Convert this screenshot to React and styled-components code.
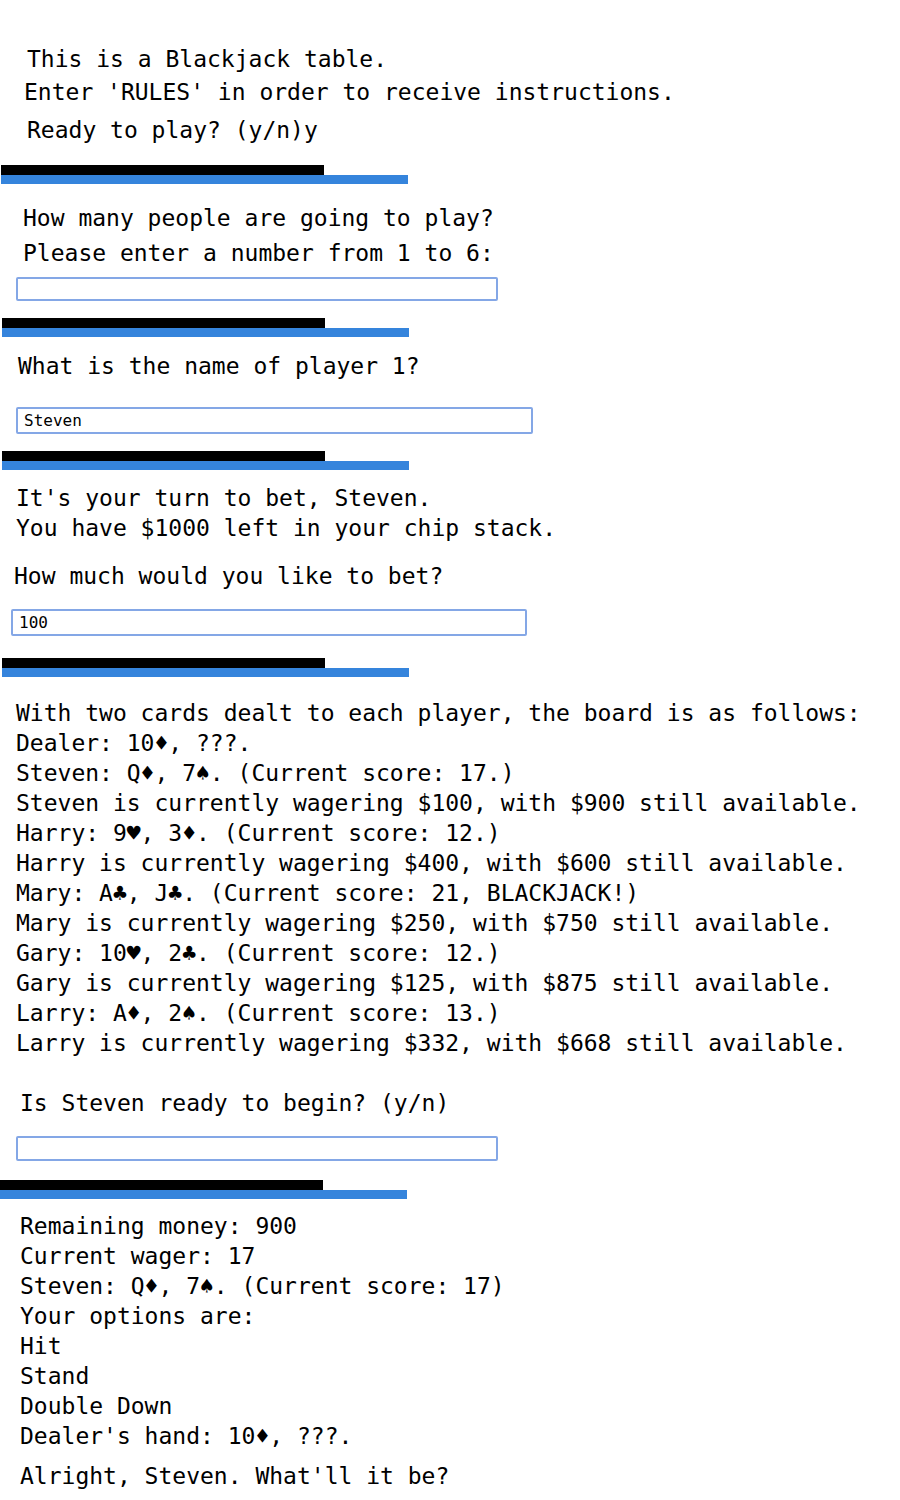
import React from "react";
import styled, { createGlobalStyle } from "styled-components";

const GlobalStyle = createGlobalStyle`
  html, body {
    margin: 0;
    padding: 0;
    background: #ffffff;
  }
  body {
    font-family: "DejaVu Sans Mono", "Liberation Mono", monospace;
    color: #000000;
  }
`;

const Page = styled.div`
  width: 900px;
  display: flex;
  flex-direction: column;
`;

const Line = styled.div`
  font-size: 23px;
  line-height: 30px;
  height: 30px;
  white-space: pre;
  margin-top: ${({ $mt }) => $mt || 0}px;
  padding-left: ${({ $x }) => $x || 16}px;
`;

const Divider = styled.div`
  display: flex;
  flex-direction: column;
  margin-top: ${({ $mt }) => $mt || 0}px;
  padding-left: ${({ $x }) => ($x === undefined ? 2 : $x)}px;
`;

const BlackBar = styled.div`
  width: 323px;
  height: 10px;
  background: #000000;
`;

const BlueBar = styled.div`
  width: 407px;
  height: 9px;
  background: #3584dc;
`;

const Field = styled.input`
  display: block;
  box-sizing: border-box;
  margin: ${({ $mt }) => $mt || 0}px 0 0 ${({ $x }) => $x || 16}px;
  width: ${({ $w }) => $w}px;
  height: ${({ $h }) => $h}px;
  padding: 0 6px;
  border: 2px solid #84a7e6;
  border-radius: 2px;
  background: #ffffff;
  font-family: "DejaVu Sans Mono", "Liberation Mono", monospace;
  font-size: 16px;
  color: #000000;
  outline: none;
`;

const Bar = ({ mt, x }) => (
  <Divider $mt={mt} $x={x}>
    <BlackBar />
    <BlueBar />
  </Divider>
);

const board = [
  "With two cards dealt to each player, the board is as follows:",
  "Dealer: 10♦, ???.",
  "Steven: Q♦, 7♠. (Current score: 17.)",
  "Steven is currently wagering $100, with $900 still available.",
  "Harry: 9♥, 3♦. (Current score: 12.)",
  "Harry is currently wagering $400, with $600 still available.",
  "Mary: A♣, J♣. (Current score: 21, BLACKJACK!)",
  "Mary is currently wagering $250, with $750 still available.",
  "Gary: 10♥, 2♣. (Current score: 12.)",
  "Gary is currently wagering $125, with $875 still available.",
  "Larry: A♦, 2♠. (Current score: 13.)",
  "Larry is currently wagering $332, with $668 still available.",
];

const turn = [
  "Remaining money: 900",
  "Current wager: 17",
  "Steven: Q♦, 7♠. (Current score: 17)",
  "Your options are:",
  "Hit",
  "Stand",
  "Double Down",
  "Dealer's hand: 10♦, ???.",
];

export default function App() {
  return (
    <Page>
      <GlobalStyle />
      <Line $mt={44} $x={27}>This is a Blackjack table.</Line>
      <Line $mt={3} $x={24}>Enter 'RULES' in order to receive instructions.</Line>
      <Line $mt={8} $x={27}>Ready to play? (y/n)y</Line>
      <Bar mt={20} x={1} />

      <Line $mt={19} $x={23}>How many people are going to play?</Line>
      <Line $mt={5} $x={23}>Please enter a number from 1 to 6:</Line>
      <Field $mt={9} $x={16} $w={482} $h={24} readOnly />
      <Bar mt={17} />

      <Line $mt={14} $x={18}>What is the name of player 1?</Line>
      <Field $mt={26} $x={16} $w={517} $h={27} defaultValue="Steven" readOnly />
      <Bar mt={17} />

      <Line $mt={13} $x={16}>It's your turn to bet, Steven.</Line>
      <Line $x={16}>You have $1000 left in your chip stack.</Line>
      <Line $mt={18} $x={14}>How much would you like to bet?</Line>
      <Field $mt={18} $x={11} $w={516} $h={27} defaultValue="100" readOnly />
      <Bar mt={22} />

      {board.map((text, i) => (
        <Line key={text} $mt={i === 0 ? 21 : 0} $x={16}>
          {text}
        </Line>
      ))}
      <Line $mt={30} $x={20}>Is Steven ready to begin? (y/n)</Line>
      <Field $mt={18} $x={16} $w={482} $h={25} readOnly />
      <Bar mt={19} x={0} />

      {turn.map((text, i) => (
        <Line key={text} $mt={i === 0 ? 12 : 0} $x={20}>
          {text}
        </Line>
      ))}
      <Line $mt={10} $x={20}>Alright, Steven. What'll it be?</Line>
    </Page>
  );
}
